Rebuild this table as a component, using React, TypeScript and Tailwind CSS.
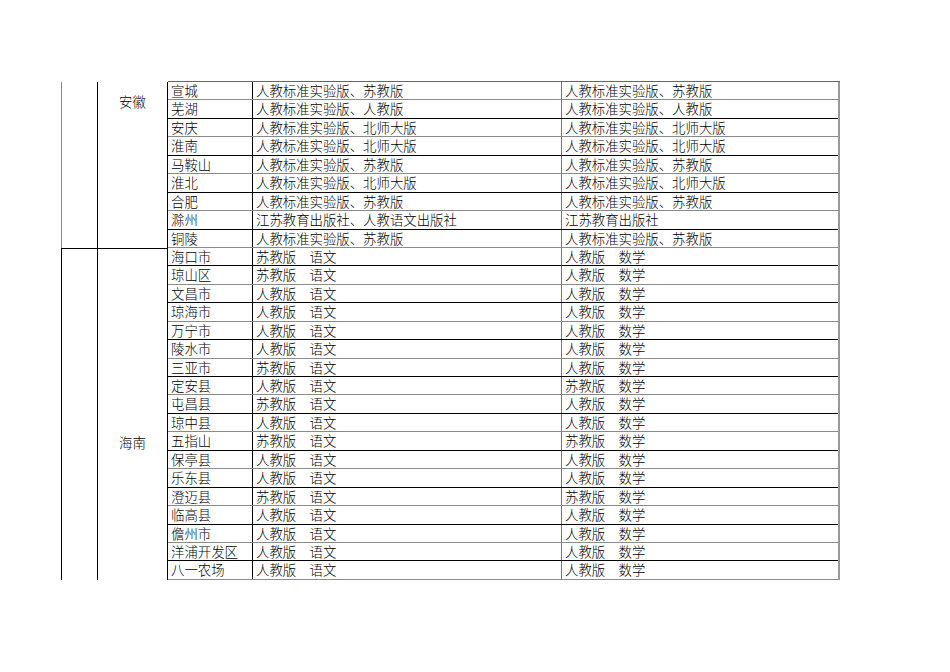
import React from "react";

type Row = [string, string, string];

const ANHUI: Row[] = [
  ["宣城", "人教标准实验版、苏教版", "人教标准实验版、苏教版"],
  ["芜湖", "人教标准实验版、人教版", "人教标准实验版、人教版"],
  ["安庆", "人教标准实验版、北师大版", "人教标准实验版、北师大版"],
  ["淮南", "人教标准实验版、北师大版", "人教标准实验版、北师大版"],
  ["马鞍山", "人教标准实验版、苏教版", "人教标准实验版、苏教版"],
  ["淮北", "人教标准实验版、北师大版", "人教标准实验版、北师大版"],
  ["合肥", "人教标准实验版、苏教版", "人教标准实验版、苏教版"],
  ["滁州", "江苏教育出版社、人教语文出版社", "江苏教育出版社"],
  ["铜陵", "人教标准实验版、苏教版", "人教标准实验版、苏教版"],
];

const R = "人教版";
const S = "苏教版";
const HAINAN_SRC: [string, string, string][] = [
  ["海口市", S, R],
  ["琼山区", S, R],
  ["文昌市", R, R],
  ["琼海市", R, R],
  ["万宁市", R, R],
  ["陵水市", R, R],
  ["三亚市", S, R],
  ["定安县", R, S],
  ["屯昌县", S, R],
  ["琼中县", R, R],
  ["五指山", S, S],
  ["保亭县", R, R],
  ["乐东县", R, R],
  ["澄迈县", S, S],
  ["临高县", R, R],
  ["儋州市", R, R],
  ["洋浦开发区", R, R],
  ["八一农场", R, R],
];
const HAINAN: Row[] = HAINAN_SRC.map(([a, b, c]) => [a, `${b}　语文`, `${c}　数学`]);

function DataRows({ rows, offset }: { rows: Row[]; offset: number }) {
  return (
    <div className="flex flex-col">
      {rows.map((r, i) => {
        const dark = (i + offset) % 2 === 1;
        return (
          <div
            key={r[0]}
            className={`grid h-[18.45px] grid-cols-[85px_309px_276px] border-b ${
              dark ? "border-black" : "border-[#8a8a8a]"
            }`}
          >
            <div className="border-r-[1.5px] border-black pl-[3px] leading-[17px] whitespace-nowrap">{r[0]}</div>
            <div className="border-r border-[#777] pl-[3px] leading-[17px] whitespace-nowrap">{r[1]}</div>
            <div className="pl-[3px] leading-[17px] whitespace-nowrap">{r[2]}</div>
          </div>
        );
      })}
    </div>
  );
}

function Group({
  label,
  rows,
  offset,
  labelPad,
  first,
}: {
  label: string;
  rows: Row[];
  offset: number;
  labelPad: string;
  first?: boolean;
}) {
  const sep = first ? "" : "border-t border-black";
  return (
    <div className="flex">
      <div className={`w-[36px] border-l border-[#8a8a8a] ${sep}`} />
      <div className={`w-[70.5px] border-l-[1.5px] border-black text-center leading-[18px] ${sep} ${labelPad}`}>
        {label}
      </div>
      <div className="border-l border-black border-r-2 border-r-[#999]">
        <DataRows rows={rows} offset={offset} />
      </div>
    </div>
  );
}

export default function App() {
  return (
    <div
      className="h-[672px] w-[950px] bg-white pl-[61px] pt-[81px] text-[13.4px] font-light text-black"
      style={{ fontFamily: '"Noto Sans CJK SC", "Noto Sans", sans-serif' }}
    >
      <div className="w-[779px]">
        <div className="ml-[106.5px] border-t border-[#666]" />
        <Group label="安徽" rows={ANHUI} offset={0} labelPad="pt-[10px]" first />
        <Group label="海南" rows={HAINAN} offset={1} labelPad="pt-[184px]" />
      </div>
    </div>
  );
}
